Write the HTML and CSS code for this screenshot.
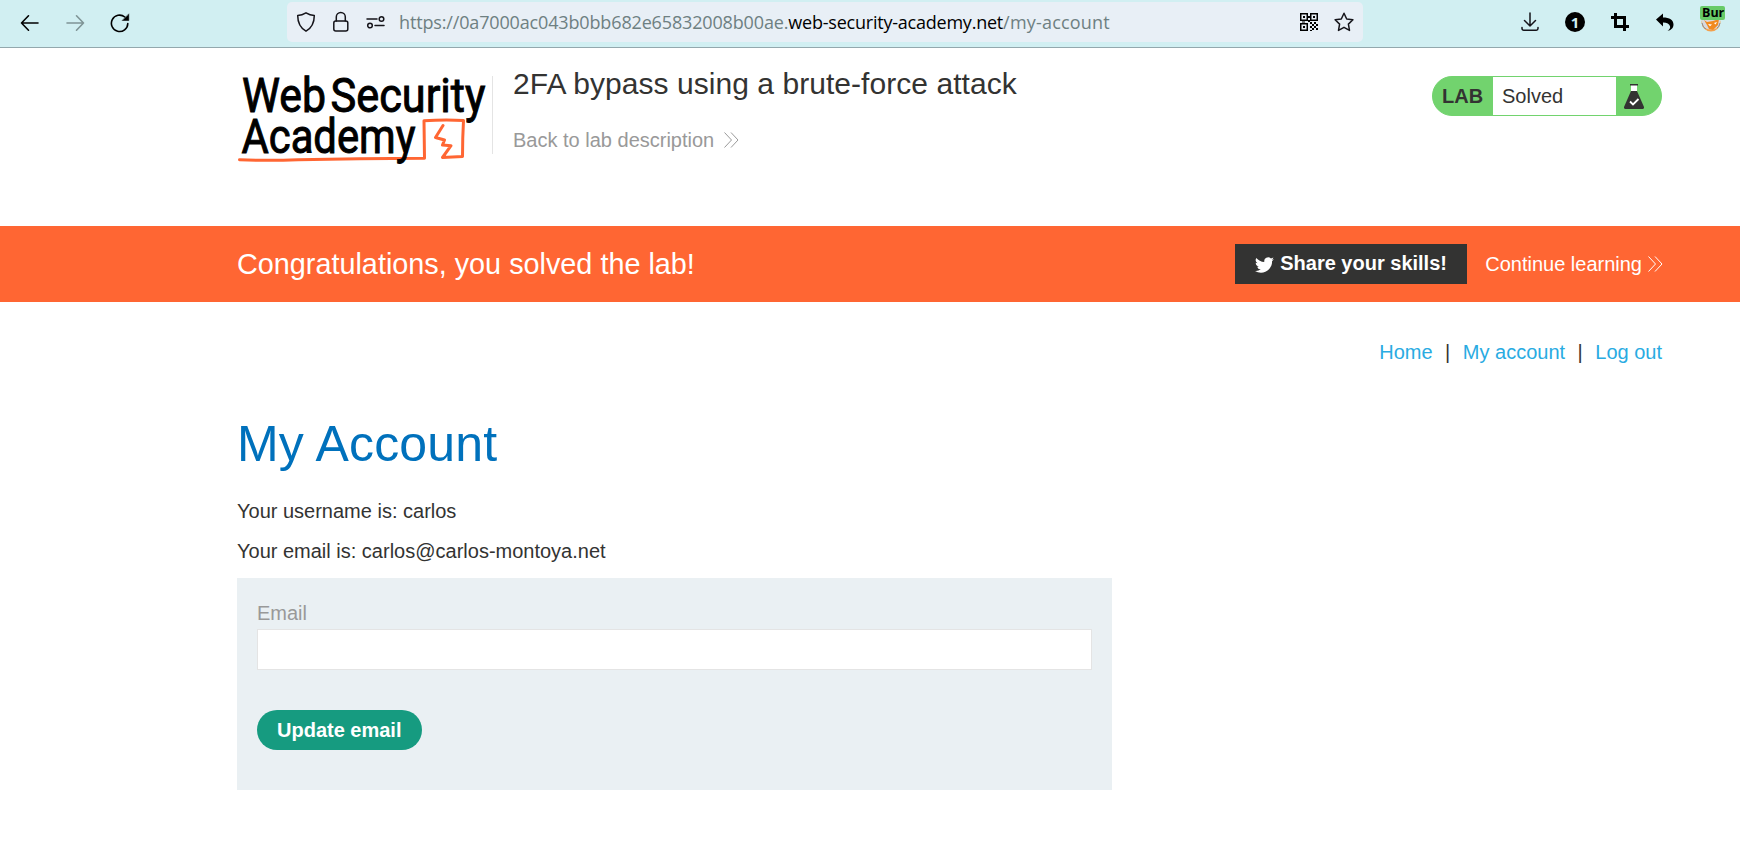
FILE: index.html
```html
<!DOCTYPE html>
<html lang="en">
<head>
<meta charset="utf-8">
<title>2FA bypass using a brute-force attack</title>
<link rel="stylesheet" href="styles.css">
</head>
<body>
<div class="toolbar">
  <div class="nav-buttons">
    <svg class="ico" width="20" height="20" viewBox="0 0 20 20"><path d="M18 10H1.500M8.500 2.800L1.500 10l7 7.200"/></svg>
    <svg class="ico dim" width="20" height="20" viewBox="0 0 20 20"><path d="M2 10h16.500M11.500 2.800l7 7.200-7 7.200"/></svg>
    <svg class="ico" width="20" height="20" viewBox="0 0 20 20"><path d="M17.800 10.500A8.200 8.200 0 1 1 14.800 4"/><path class="fill" d="M18.800 1.200v6.300h-6.300z"/></svg>
  </div>
  <div class="urlbar">
    <svg class="ico thin shield" width="20" height="22" viewBox="0 0 20 22"><path d="M10 1.800c2.800 1.700 5.500 2.500 8.300 2.700 0 6.800-1.800 12-8.300 15.700C3.500 16.500 1.700 11.300 1.700 4.500 4.500 4.300 7.200 3.500 10 1.800z"/></svg>
    <svg class="ico thin lock" width="18" height="22" viewBox="0 0 18 22"><rect x="1.800" y="10" width="14" height="10" rx="2"/><path d="M4.300 10V6a4.500 4.500 0 0 1 9 0v4"/></svg>
    <svg class="ico thin perms" width="20" height="14" viewBox="0 0 20 14"><path d="M1 4h10M9 10.500h9"/><circle cx="15.500" cy="4" r="2.300"/><circle cx="4" cy="10.500" r="2.300"/></svg>
    <div class="url"><span class="u1">https://0a7000ac043b0bb682e65832008b00ae.</span><span class="host">web-security-academy.net</span><span class="u2">/my-account</span></div>
    <svg class="qr" width="18" height="18" viewBox="0 0 18 18"><path fill-rule="evenodd" d="M0 0h8v8H0zM1.500 1.500v5h5v-5zM3 3h2v2H3zM10 0h8v8h-8zM11.500 1.500v5h5v-5zM13 3h2v2h-2zM0 10h8v8H0zM1.500 11.500v5h5v-5zM3 13h2v2H3zM8 3h2v2H8zM8 7h2v2H8zM10 9h2v2h-2zM14 9h2v2h-2zM12 11h2v2h-2zM16 11h2v2h-2zM10 13h2v2h-2zM14 13h2v2h-2zM12 15h2v2h-2zM16 15h2v2h-2zM10 17h2v1h-2zM2 8.500h3v1H2z"/></svg>
    <svg class="ico thin star" width="20" height="20" viewBox="0 0 20 20"><path d="M10 1.300l2.700 5.700 6.200.800-4.500 4.300 1.100 6.300L10 15.300l-5.500 3.100 1.100-6.300L1.100 7.800 7.300 7z"/></svg>
  </div>
  <div class="extensions">
    <svg class="ico thin" width="18" height="20" viewBox="0 0 18 20"><path d="M9 1v13M3.500 8.500L9 14l5.500-5.500M1 15.500v1a1.700 1.700 0 0 0 1.700 1.700h12.600A1.700 1.700 0 0 0 17 16.500v-1"/></svg>
    <span class="counter">1</span>
    <svg width="18" height="18" viewBox="0 0 18 18"><path d="M4.500 0v13.500H18M0 4.500h13.500V18" fill="none" stroke="#000" stroke-width="3"/></svg>
    <svg width="18" height="18" viewBox="0 0 18 18"><path d="M0 6.500L7 .500v4c6.500 0 10.500 2.500 10.500 7 0 3.500-2.500 6-6 6.300 2.300-1.200 3-3 2.500-4.500C13.500 11 11 9.500 7 9.500v4z"/></svg>
    <div class="fox"><svg width="20" height="20" viewBox="0 0 20 20"><circle cx="10" cy="10" r="9.500" fill="#f4a04b"/><path d="M1 8h18q.500 5-3 8-6 3-12 0Q.500 13 1 8z" fill="#d9d9dc"/><path d="M1 11q1 5 4 6M19 11q-1 4-3 5" stroke="#8d8d90" fill="none"/><path d="M3 8l3 2 6-1 6-2-1 6-5 5-4-1-2-4z" fill="#f28a1e"/><path d="M7 12l4 .500-2 1.700zM13 11l3-1-1.500 2.500z" fill="#fff"/></svg><span class="fox-tag">Bur</span></div>
  </div>
</div>

<header class="lab-header">
  <svg class="logo" width="254" height="100" viewBox="0 0 254 100">
    <path class="logo-line" d="M1.500 93.700Q30 95 60 93.700Q120 92.500 186.500 92.200L186 54.800Q206 53.500 225.500 54.500Q224.500 72 224.500 90.500L204.500 91.500M205 59.500L197.500 71.500L206.500 74L204.500 79L213 79.700L204.500 91.500"/>
    <g class="logo-text">
      <text x="4" y="46" textLength="84" lengthAdjust="spacingAndGlyphs">Web</text>
      <text x="92.500" y="46" textLength="155" lengthAdjust="spacingAndGlyphs">Security</text>
      <text x="3.500" y="87" textLength="174" lengthAdjust="spacingAndGlyphs">Academy</text>
    </g>
  </svg>
  <div class="lab-title">
    <h2>2FA bypass using a brute-force attack</h2>
    <a class="back">Back to lab description<svg class="chev" width="15" height="16" viewBox="0 0 15 16"><path d="M.500.500L7.500 8l-7 7.500M7 .500L14 8l-7 7.500"/></svg></a>
  </div>
  <div class="status">
    <b>LAB</b><span class="state">Solved</span>
    <svg class="flask" width="20" height="25" viewBox="0 0 20 25"><path class="neck" d="M7 1h6v7H7z"/><path d="M6 0h8v1.500H6z"/><path d="M7 7h6l7 16q.200 2-1.500 2h-17Q-.200 25 0 23z"/><path class="tick" d="M6 17.500l3 3 5.500-5.500"/></svg>
  </div>
</header>

<section class="banner">
  <h4>Congratulations, you solved the lab!</h4>
  <button class="share"><svg width="19" height="18" viewBox="0 1.500 24 21"><path d="M23.950 4.570a10 10 0 0 1-2.820.770 4.960 4.960 0 0 0 2.160-2.720c-.950.550-2 .950-3.130 1.180a4.920 4.920 0 0 0-8.380 4.480C7.690 8.090 4.070 6.130 1.640 3.160a4.930 4.930 0 0 0 1.520 6.570 4.900 4.900 0 0 1-2.230-.610v.060a4.920 4.920 0 0 0 3.950 4.830 5 5 0 0 1-2.210.080 4.940 4.940 0 0 0 4.600 3.420A9.870 9.870 0 0 1 0 19.540a14 14 0 0 0 7.550 2.210c9.050 0 14-7.500 14-13.980 0-.210 0-.420-.020-.630a9.940 9.940 0 0 0 2.420-2.570z"/></svg>Share your skills!</button>
  <a class="continue">Continue learning<svg class="chev" width="15" height="16" viewBox="0 0 15 16"><path d="M.500.500L7.500 8l-7 7.500M7 .500L14 8l-7 7.500"/></svg></a>
</section>

<main>
  <nav class="links"><a>Home</a><i>|</i><a>My account</a><i>|</i><a>Log out</a></nav>
  <h1>My Account</h1>
  <p>Your username is: carlos</p>
  <p>Your email is: carlos@carlos-montoya.net</p>
  <form>
    <label for="email">Email</label>
    <input id="email" type="email">
    <button class="update" type="button">Update email</button>
  </form>
</main>
</body>
</html>
```
FILE: styles.css
```css
* { box-sizing: border-box; }
body { margin: 0; background: #fff; color: #333332; font: 20px/20px "Liberation Sans", Arial, sans-serif; overflow: hidden; }
h1, h2, h4, p { margin: 0; font-weight: 400; }
svg { display: block; flex: none; }

/* Browser toolbar */
.toolbar { height: 48px; background: #d1eff2; border-bottom: 1px solid #93a8ad; display: flex; align-items: flex-start; }
.nav-buttons { width: 287px; display: flex; gap: 25px; padding: 13px 0 0 20px; }
.ico { fill: none; stroke: #000; stroke-width: 1.6; stroke-linecap: round; stroke-linejoin: round; }
.ico.thin { stroke: #15141a; stroke-width: 1.5; }
.ico .fill { fill: #000; stroke-width: .5; }
.ico.dim { stroke: #7f9496; }
.urlbar { width: 1076px; height: 40px; margin-top: 2px; border-radius: 5px; background: #e8eff6; display: flex; align-items: center; padding-left: 9px; }
.lock { margin-left: 16px; }
.perms { margin-left: 16px; }
.url { width: 901px; margin-left: 13px; font: 18px/40px "Open Sans", "Noto Sans", sans-serif; color: #6e8082; white-space: nowrap; letter-spacing: -.15px; }
.url .host { color: #000; letter-spacing: -.22px; }
.url .u2 { letter-spacing: .2px; }
.star { margin-left: 16px; }
.extensions { display: flex; gap: 27px; padding: 12px 0 0 158px; align-items: center; }
.counter { width: 20px; height: 20px; border-radius: 50%; background: #000; color: #d1eff2; font: 700 15px/20px "Open Sans", sans-serif; text-align: center; margin-left: -1px; margin-right: -1px; }
.fox { position: relative; width: 20px; height: 20px; }
.fox-tag { position: absolute; left: -1px; top: -6px; width: 25px; height: 14px; border-radius: 2px; background: #68cb68; color: #000; font: 700 12.500px/13px "Open Sans", sans-serif; padding-left: 2px; }

/* Lab header */
.lab-header { height: 178px; display: flex; padding: 18px 78px 0 238px; }
.logo { margin-right: 1px; overflow: visible; }
.logo-text { font: 400 48px Roboto, sans-serif; fill: #000; stroke: #000; stroke-width: 1; }
.logo-line { fill: none; stroke: #ff6633; stroke-width: 3; stroke-linejoin: round; stroke-linecap: round; }
.lab-title { flex: 1; height: 78px; margin-top: 10px; border-left: 1px solid #e4e4e4; padding-left: 20px; margin-left: -1px; }
.lab-title h2 { font-size: 30px; line-height: 30px; margin-top: -7px; letter-spacing: .05px; }
.back { display: flex; align-items: center; margin-top: 31px; color: #999; }
.back .chev { margin-left: 10px; }
.chev { fill: none; stroke: currentColor; stroke-width: 1; }
.status { display: flex; align-items: center; width: 230px; height: 40px; margin-top: 10px; border: 1px solid #72d36e; border-radius: 20px; background: #72d36e; overflow: hidden; }
.status b { width: 60px; padding-left: 9px; }
.state { width: 123px; height: 38px; line-height: 39px; background: #fff; padding-left: 9px; }
.flask { margin-left: 8px; fill: #333332; }
.flask .neck { fill: #fff; }
.flask .tick { fill: none; stroke: #fff; stroke-width: 1.8; }

/* Solved banner */
.banner { height: 76px; background: #ff6633; color: #fff; display: flex; align-items: center; padding: 0 77px 0 237px; }
.banner h4 { flex: 1; font-size: 28.800px; }
button { border: 0; color: #fff; font: 700 20px/20px "Liberation Sans", Arial, sans-serif; padding: 0 20px; height: 40px; display: flex; align-items: center; white-space: nowrap; }
.share { width: 232px; background: #333332; gap: 6px; padding-bottom: 2px; }
.share svg { fill: #fff; margin-top: 3px; }
.continue { display: flex; align-items: center; gap: 6px; margin-left: 18px; }

/* Account page */
main { padding: 40px 78px 0 237px; }
.links { display: flex; justify-content: flex-end; color: #29abe2; }
.links i { font-style: normal; color: #333332; padding: 0 12.500px; }
h1 { font-size: 50px; line-height: 60px; margin: 52px 0 17px; color: #0071bc; letter-spacing: .2px; }
p { line-height: 40px; }
form { width: 875px; height: 212px; margin-top: 7px; padding: 20px; background: #eaf0f3; }
label { display: block; line-height: 31px; color: #999; }
input { display: block; width: 835px; height: 41px; border: 1px solid #e4e4e4; background: #fff; border-radius: 0; padding: 0 10px; }
.update { width: 165px; margin-top: 40px; background: #169b80; border-radius: 20px; }
```
